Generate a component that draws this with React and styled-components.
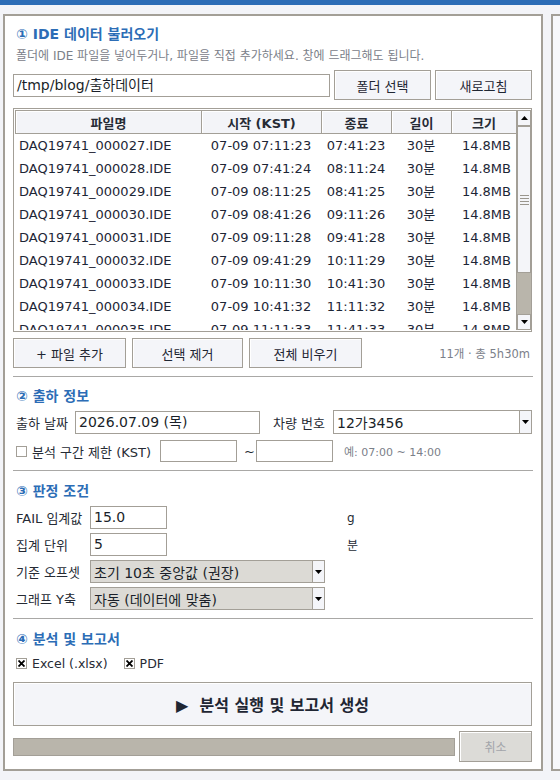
import React from "react";
import styled, { createGlobalStyle } from "styled-components";

const Global = createGlobalStyle`
  html, body { margin: 0; padding: 0; }
  body {
    background: #f3f4f8;
    font-family: "DejaVu Sans", "Noto Sans CJK KR", sans-serif;
    font-size: 12px;
    color: #1f2633;
  }
  * { box-sizing: border-box; }
`;

const TopBar = styled.div`
  height: 5px;
  background: #2c6db6;
`;

const Stage = styled.div`
  display: flex;
  gap: 8px;
  padding: 9px 0 0 3px;
  overflow: hidden;
`;

const Panel = styled.div`
  flex: none;
  width: 540px;
  height: 757px;
  background: #fff;
  border: 2px solid #a39f97;
  padding: 0 9px 0 8px;
  display: flex;
  flex-direction: column;
`;

const SidePanel = styled.div`
  flex: none;
  width: 40px;
  height: 757px;
  background: #f7f8fb;
  border: 2px solid #a39f97;
`;

const Title = styled.div`
  height: 16px;
  line-height: 16px;
  margin-top: ${(p) => p.$mt}px;
  padding-left: 3px;
  font-size: 14px;
  font-weight: bold;
  color: #2c6db6;
  white-space: nowrap;
`;

const Sub = styled.div`
  height: 16px;
  line-height: 16px;
  margin-top: 6px;
  padding-left: 3px;
  font-size: 12px;
  color: #7b8089;
  white-space: nowrap;
`;

const Row = styled.div`
  display: flex;
  align-items: center;
  height: ${(p) => p.$h}px;
  margin-top: ${(p) => p.$mt}px;
  gap: ${(p) => p.$gap || 0}px;
`;

const Entry = styled.div`
  height: ${(p) => p.$h || 23}px;
  width: ${(p) => (p.$w ? p.$w + "px" : "auto")};
  flex: ${(p) => (p.$grow ? 1 : "none")};
  border: 1px solid #a39f97;
  background: #fff;
  font-size: 14px;
  line-height: ${(p) => (p.$h || 23) - 2}px;
  padding-left: 3px;
  color: #1a1f29;
  white-space: nowrap;
  overflow: hidden;
`;

const Button = styled.div`
  flex: none;
  width: ${(p) => p.$w}px;
  height: ${(p) => p.$h || 30}px;
  border: 1px solid #a39f97;
  background: #f4f5f9;
  box-shadow: inset 1px 1px 0 #fff;
  display: flex;
  align-items: center;
  justify-content: center;
  font-size: ${(p) => p.$fs || 13}px;
  font-weight: ${(p) => (p.$bold ? "bold" : "normal")};
  color: ${(p) => (p.$disabled ? "#a3a5aa" : "#1f2633")};
  white-space: pre;
  ${(p) => p.$disabled && "background: #dcdbd7;"}
`;

const TableBox = styled.div`
  margin-top: 8px;
  height: 224px;
  border: 1px solid #a39f97;
  padding: 1px 0 1px 1px;
  display: flex;
  overflow: hidden;
`;

const List = styled.div`
  flex: 1;
  overflow: hidden;
`;

const Grid = styled.div`
  display: grid;
  grid-template-columns: 186px 120px 70px 60px 1fr;
`;

const Head = styled.div`
  height: 24px;
  border: 1px solid #a39f97;
  margin-right: -1px;
  background: #f3f4f8;
  box-shadow: inset 1px 1px 0 #fff;
  display: flex;
  align-items: center;
  justify-content: center;
  font-size: 13px;
  font-weight: bold;
  color: #262b35;
  white-space: nowrap;
`;

const Cell = styled.div`
  height: 23px;
  line-height: 23px;
  font-size: 13px;
  color: #1d2636;
  white-space: nowrap;
  text-align: ${(p) => p.$align || "center"};
  padding: ${(p) => (p.$align === "left" ? "0 0 0 4px" : p.$align === "right" ? "0 5px 0 0" : "0")};
`;

const Scroll = styled.div`
  flex: none;
  width: 15px;
  display: flex;
  flex-direction: column;
  background: #b9b5ab;
  border-left: 1px solid #a39f97;
`;

const Arrow = styled.div`
  flex: none;
  height: 16px;
  background: #f4f5f9;
  border: 1px solid #a39f97;
  display: flex;
  align-items: center;
  justify-content: center;
`;

const Thumb = styled.div`
  flex: none;
  height: 147px;
  background: #f4f5f9;
  border: 1px solid #a39f97;
  display: flex;
  flex-direction: column;
  align-items: center;
  justify-content: center;
  gap: 2px;
`;

const Grip = styled.div`
  width: 9px;
  height: 1px;
  background: #9a968e;
`;

const Trough = styled.div`
  flex: 1;
`;

const Count = styled.div`
  margin-left: auto;
  font-size: 11.5px;
  color: #7b8089;
  padding-right: 2px;
  white-space: nowrap;
`;

const Sep = styled.div`
  height: 2px;
  margin-top: ${(p) => p.$mt}px;
  border-top: 1px solid #a9a8a6;
  border-bottom: 1px solid #fff;
  margin-right: -1px;
`;

const Label = styled.div`
  flex: none;
  width: ${(p) => (p.$w ? p.$w + "px" : "auto")};
  padding-left: ${(p) => p.$pl ?? 3}px;
  font-size: 13px;
  color: #262b35;
  white-space: nowrap;
`;

const Hint = styled.div`
  margin-left: ${(p) => p.$ml || 0}px;
  font-size: 11px;
  color: #7b8089;
  white-space: nowrap;
`;

const Combo = styled.div`
  flex: ${(p) => (p.$grow ? 1 : "none")};
  width: ${(p) => (p.$w ? p.$w + "px" : "auto")};
  height: ${(p) => p.$h || 24}px;
  border: 1px solid #a39f97;
  background: ${(p) => (p.$ro ? "#dcdad5" : "#fff")};
  display: flex;
`;

const ComboText = styled.div`
  flex: 1;
  font-size: 14px;
  padding-left: 3px;
  display: flex;
  align-items: center;
  color: #1a1f29;
  white-space: nowrap;
`;

const ComboBtn = styled.div`
  flex: none;
  width: 12px;
  border-left: 1px solid #a39f97;
  background: #f4f5f9;
  display: flex;
  align-items: center;
  justify-content: center;
`;

const Tri = ({ up }) => (
  <svg width="7" height="4" viewBox="0 0 7 4">
    <path d={up ? "M0 4h7L3.5 0z" : "M0 0h7L3.5 4z"} fill="#000" />
  </svg>
);

const Check = styled.div`
  flex: none;
  width: 11px;
  height: 11px;
  border: 1px solid #a39f97;
  background: #fff;
  display: flex;
  align-items: center;
  justify-content: center;
`;

const CheckLabel = styled.div`
  flex: none;
  display: flex;
  align-items: center;
  gap: 5px;
  width: ${(p) => (p.$w ? p.$w + "px" : "auto")};
  font-size: ${(p) => p.$fs || 12}px;
  color: #262b35;
  padding-left: ${(p) => p.$pl ?? 0}px;
  white-space: nowrap;
`;

const XMark = () => (
  <svg width="7" height="7" viewBox="0 0 7 7">
    <path d="M0.5 0.5L6.5 6.5M6.5 0.5L0.5 6.5" stroke="#000" strokeWidth="1.8" />
  </svg>
);

const FormGrid = styled.div`
  display: grid;
  grid-template-columns: 77px 235px auto;
  grid-auto-rows: 23px;
  row-gap: 4px;
  margin-top: 7px;
  align-items: center;
`;

const Unit = styled.div`
  padding-left: 22px;
  font-size: 12px;
  color: #262b35;
`;

const Progress = styled.div`
  flex: 1;
  height: 18px;
  background: #b9b5ab;
  border: 1px solid #a39f97;
`;

const rows = [
  ["27", "07:11:23", "07:41:23"],
  ["28", "07:41:24", "08:11:24"],
  ["29", "08:11:25", "08:41:25"],
  ["30", "08:41:26", "09:11:26"],
  ["31", "09:11:28", "09:41:28"],
  ["32", "09:41:29", "10:11:29"],
  ["33", "10:11:30", "10:41:30"],
  ["34", "10:41:32", "11:11:32"],
  ["35", "11:11:33", "11:41:33"],
];

export default function App() {
  return (
    <>
      <Global />
      <TopBar />
      <Stage>
        <Panel>
          <Title $mt={10}>① IDE 데이터 불러오기</Title>
          <Sub>폴더에 IDE 파일을 넣어두거나, 파일을 직접 추가하세요. 창에 드래그해도 됩니다.</Sub>
          <Row $h={30} $mt={6} $gap={4}>
            <Entry $grow $h={23}>/tmp/blog/출하데이터</Entry>
            <Button $w={97}>폴더 선택</Button>
            <Button $w={97}>새로고침</Button>
          </Row>
          <TableBox>
            <List>
              <Grid>
                <Head>파일명</Head>
                <Head>시작 (KST)</Head>
                <Head>종료</Head>
                <Head>길이</Head>
                <Head>크기</Head>
                {rows.map(([n, s, e]) => (
                  <React.Fragment key={n}>
                    <Cell $align="left">DAQ19741_0000{n}.IDE</Cell>
                    <Cell>07-09 {s}</Cell>
                    <Cell>{e}</Cell>
                    <Cell>30분</Cell>
                    <Cell $align="right">14.8MB</Cell>
                  </React.Fragment>
                ))}
              </Grid>
            </List>
            <Scroll>
              <Arrow>
                <Tri up />
              </Arrow>
              <Thumb>
                <Grip />
                <Grip />
                <Grip />
                <Grip />
              </Thumb>
              <Trough />
              <Arrow>
                <Tri />
              </Arrow>
            </Scroll>
          </TableBox>
          <Row $h={30} $mt={6} $gap={6}>
            <Button $w={113}>+ 파일 추가</Button>
            <Button $w={111}>선택 제거</Button>
            <Button $w={113}>전체 비우기</Button>
            <Count>11개 · 총 5h30m</Count>
          </Row>
          <Sep $mt={8} />

          <Title $mt={10}>② 출하 정보</Title>
          <Row $h={24} $mt={6}>
            <Label $w={62}>출하 날짜</Label>
            <Entry $w={185} $h={23}>2026.07.09 (목)</Entry>
            <Label $w={73} $pl={13}>차량 번호</Label>
            <Combo $grow>
              <ComboText>12가3456</ComboText>
              <ComboBtn>
                <Tri />
              </ComboBtn>
            </Combo>
          </Row>
          <Row $h={22} $mt={6}>
            <CheckLabel $pl={3} $w={147} $fs={13}>
              <Check />
              분석 구간 제한 (KST)
            </CheckLabel>
            <Entry $w={77} $h={22} />
            <Label $w={19} $pl={7}>~</Label>
            <Entry $w={77} $h={22} />
            <Hint $ml={11}>예: 07:00 ~ 14:00</Hint>
          </Row>
          <Sep $mt={8} />

          <Title $mt={11}>③ 판정 조건</Title>
          <FormGrid>
            <Label>FAIL 임계값</Label>
            <Entry $w={77}>15.0</Entry>
            <Unit>g</Unit>
            <Label>집계 단위</Label>
            <Entry $w={77}>5</Entry>
            <Unit>분</Unit>
            <Label>기준 오프셋</Label>
            <Combo $ro $w={235} $h={23}>
              <ComboText>초기 10초 중앙값 (권장)</ComboText>
              <ComboBtn>
                <Tri />
              </ComboBtn>
            </Combo>
            <div />
            <Label>그래프 Y축</Label>
            <Combo $ro $w={235} $h={23}>
              <ComboText>자동 (데이터에 맞춤)</ComboText>
              <ComboBtn>
                <Tri />
              </ComboBtn>
            </Combo>
            <div />
          </FormGrid>
          <Sep $mt={8} />

          <Title $mt={11}>④ 분석 및 보고서</Title>
          <Row $h={16} $mt={8} $gap={16}>
            <CheckLabel $pl={3} $fs={12.5}>
              <Check>
                <XMark />
              </Check>
              Excel (.xlsx)
            </CheckLabel>
            <CheckLabel $fs={12.5}>
              <Check>
                <XMark />
              </Check>
              PDF
            </CheckLabel>
          </Row>
          <Row $h={44} $mt={11}>
            <Button $w={519} $h={44} $fs={16} $bold>
              {"▶  분석 실행 및 보고서 생성"}
            </Button>
          </Row>
          <Row $h={31} $mt={5} $gap={4}>
            <Progress />
            <Button $w={73} $h={31} $fs={12} $disabled>
              취소
            </Button>
          </Row>
        </Panel>
        <SidePanel />
      </Stage>
    </>
  );
}
